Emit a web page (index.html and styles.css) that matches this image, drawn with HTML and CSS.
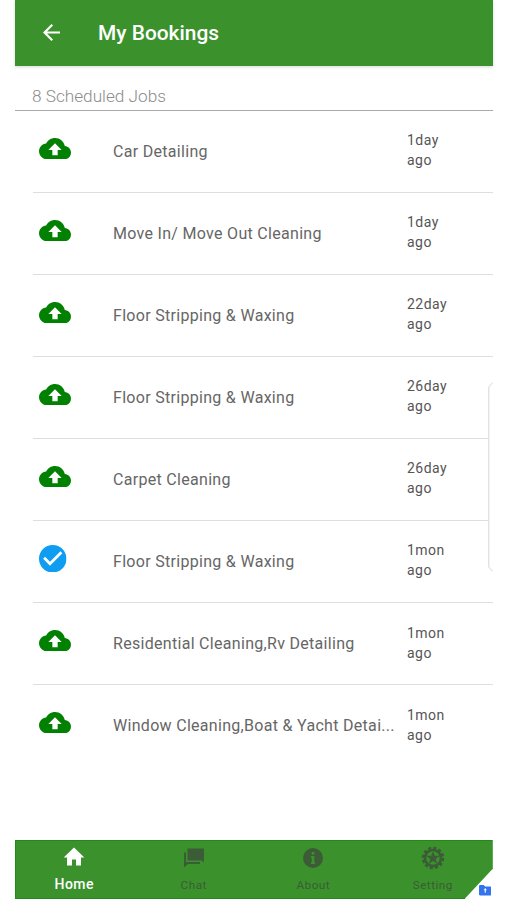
FILE: index.html
```
<!DOCTYPE html>
<html lang="en">
<head>
<meta charset="utf-8">
<title>My Bookings</title>
<link rel="stylesheet" href="styles.css">
</head>
<body>
<svg class="defs" aria-hidden="true">
  <symbol id="cloud" viewBox="0 4 24 16"><path d="M19.35 10.04C18.67 6.59 15.64 4 12 4 9.11 4 6.6 5.64 5.35 8.04 2.34 8.36 0 10.91 0 14c0 3.31 2.69 6 6 6h13c2.76 0 5-2.24 5-5 0-2.64-2.05-4.78-4.65-4.96zM14 13v4h-4v-4H7l5-5 5 5h-3z"/></symbol>
  <symbol id="check" viewBox="2 2 20 20"><path d="M12 2C6.48 2 2 6.48 2 12s4.48 10 10 10 10-4.48 10-10S17.52 2 12 2zm-2 15l-5-5 1.41-1.41L10 14.17l7.59-7.59L19 8l-9 9z"/></symbol>
</svg>
<div class="phone">
  <header class="bar">
    <svg class="back" viewBox="4 4 16 16"><path d="M20 11H7.83l5.59-5.59L12 4l-8 8 8 8 1.41-1.41L7.83 13H20v-2z"/></svg>
    <h1>My Bookings</h1>
  </header>
  <div class="count">8 Scheduled Jobs</div>
  <main class="jobs">
    <div class="job"><svg class="cloud"><use href="#cloud"/></svg><span class="name">Car Detailing</span><span class="when">1day<br>ago</span></div>
    <div class="job"><svg class="cloud"><use href="#cloud"/></svg><span class="name">Move In/ Move Out Cleaning</span><span class="when">1day<br>ago</span></div>
    <div class="job"><svg class="cloud"><use href="#cloud"/></svg><span class="name">Floor Stripping &amp; Waxing</span><span class="when">22day<br>ago</span></div>
    <div class="job"><svg class="cloud"><use href="#cloud"/></svg><span class="name">Floor Stripping &amp; Waxing</span><span class="when">26day<br>ago</span></div>
    <div class="job"><svg class="cloud"><use href="#cloud"/></svg><span class="name">Carpet Cleaning</span><span class="when">26day<br>ago</span></div>
    <div class="job"><svg class="check"><use href="#check"/></svg><span class="name">Floor Stripping &amp; Waxing</span><span class="when">1mon<br>ago</span></div>
    <div class="job"><svg class="cloud"><use href="#cloud"/></svg><span class="name">Residential Cleaning,Rv Detailing</span><span class="when">1mon<br>ago</span></div>
    <div class="job"><svg class="cloud"><use href="#cloud"/></svg><span class="name">Window Cleaning,Boat &amp; Yacht Detai...</span><span class="when">1mon<br>ago</span></div>
  </main>
  <nav class="tabs">
    <div class="tab active"><svg viewBox="0 0 24 24"><path d="M10 20.500v-6h4v6h5v-8h3.300L12 2.500 1.700 12.500H5v8z"/></svg><span>Home</span></div>
    <div class="tab"><svg viewBox="0 0 24 24"><path d="M5.500 2.500H22V16.500L19.500 14.500H5.500zM2 6.500h2V16h14v2H6l-4 3.500z"/></svg><span>Chat</span></div>
    <div class="tab"><svg viewBox="0 0 24 24"><path fill-rule="evenodd" d="M12 2a10 10 0 1 0 0 20 10 10 0 0 0 0-20zM10.700 6h2.600v2.600h-2.600zM10 10h3.300v6.300H14V18h-4v-1.700h.7v-4.600H10z"/></svg><span>About</span></div>
    <div class="tab"><svg viewBox="0 0 24 24"><circle cx="12" cy="12" r="8" fill="none" stroke="currentColor" stroke-width="2.600"/><circle cx="12" cy="12" r="10" fill="none" stroke="currentColor" stroke-width="2.600" stroke-dasharray="3.140 2.096"/><path d="M12 5l1.700 4.700 5 .1-4 3.100 1.400 4.800-4.100-2.800-4.100 2.800 1.400-4.800-4-3.100 5-.1z"/></svg><span>Setting</span></div>
  </nav>
  <svg class="folder" viewBox="0 0 12 10"><path fill="#3274ee" d="M1 0h3.500L6 1.500h5a1 1 0 0 1 1 1V9a1 1 0 0 1-1 1H1a1 1 0 0 1-1-1V1a1 1 0 0 1 1-1z"/><path fill="#fff" d="M6 3l1.500 2h-1v2.500h-1V5h-1z"/></svg>
  <svg class="handle" viewBox="0 0 5 190"><path d="M4.500 .7L.8 5v180l3.700 4.300"/></svg>
</div>
</body>
</html>
```
FILE: styles.css
```
body {
  margin: 0;
  background: #fff;
  font-family: Roboto, "Liberation Sans", sans-serif;
}

svg { fill: currentColor; flex: none; }

.defs { position: absolute; width: 0; height: 0; }

.phone {
  position: relative;
  display: flex;
  flex-direction: column;
  width: 478px;
  height: 899px;
  margin-left: 14.5px;
}

.bar {
  display: flex;
  align-items: center;
  height: 65.5px;
  box-sizing: border-box;
  padding-left: 28.5px;
  background: #3b922d;
  box-shadow: 0 1px 3px rgba(0, 0, 0, .16);
  color: #fff;
}

.back { width: 17px; height: 17px; margin-right: 38px; }

h1 {
  margin: 0;
  font-size: 20.9px;
  font-weight: 500;
  line-height: 26px;
}

.count {
  height: 44px;
  padding-left: 17.5px;
  border-bottom: 1px solid #aaa;
  color: #8c8c8c;
  font-size: 17.2px;
  font-weight: 300;
  line-height: 61px;
}

.jobs { margin-left: 18.5px; }

.job {
  display: flex;
  height: 82.1px;
  box-sizing: border-box;
  border-bottom: 1px solid #dedede;
}

.job:last-child { border-bottom: 0; }

.cloud { width: 32px; height: 21.3px; margin: 27px 42px 0 6px; color: #018001; }

.check { width: 27.5px; height: 27.5px; margin: 24px 46.5px 0 6px; color: #0e9df0; }

.name {
  width: 294px;
  padding-top: 31px;
  color: #666;
  font-size: 16px;
  line-height: 20px;
  letter-spacing: .3px;
  white-space: nowrap;
}

.when {
  padding-top: 19.5px;
  color: #555;
  font-size: 14px;
  line-height: 20px;
  letter-spacing: .45px;
}

.tabs {
  display: grid;
  grid-template-columns: repeat(4, 1fr);
  height: 59px;
  margin-top: auto;
  background: #3b922d;
  box-shadow: inset 0 0 0 1px #208a16;
  clip-path: polygon(0 0, 100% 0, 100% 29px, 450px 100%, 0 100%);
}

.tab {
  display: flex;
  flex-direction: column;
  align-items: center;
  padding-top: 6px;
  color: #3b5c36;
  font-size: 11.8px;
  line-height: 14px;
  letter-spacing: .45px;
}

.tab svg { width: 24px; height: 24px; margin-bottom: 7.5px; }

.active { padding-top: 5px; color: #fff; font-size: 14px; font-weight: 500; }

.folder { position: absolute; right: 1.5px; bottom: 3.5px; width: 12.5px; height: 10.4px; }

.handle {
  position: absolute;
  top: 382px;
  right: 0;
  width: 5px;
  height: 190px;
  background: #fff;
  fill: none;
  stroke: #d6d6d6;
}
```
